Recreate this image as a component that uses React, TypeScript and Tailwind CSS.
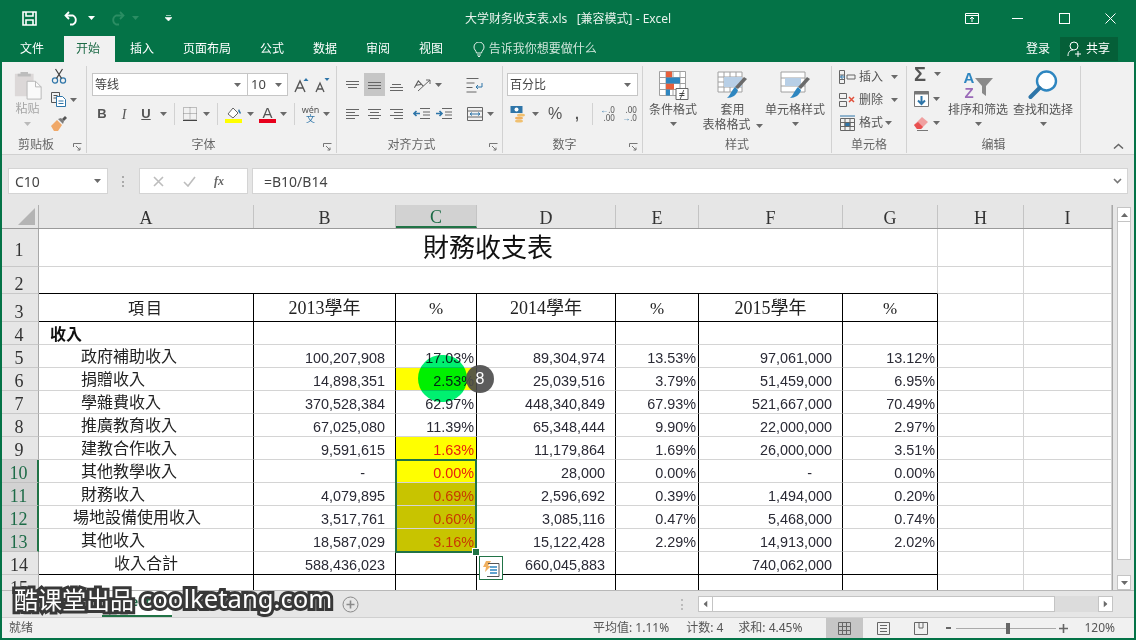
// App.tsx - Excel window, 财务收支表
import type { ReactNode } from 'react';

const tabs = ['文件', '开始', '插入', '页面布局', '公式', '数据', '审阅', '视图'];

const colW = ['w-[215px]', 'w-[142px]', 'w-[81px]', 'w-[139px]', 'w-[83px]', 'w-[144px]', 'w-[95px]', 'w-[86px]', 'w-[88px]'];
const colNames = ['A', 'B', 'C', 'D', 'E', 'F', 'G', 'H', 'I'];

type Row = { n: number; label: string; pad: string; v: string[] };

const rows: Row[] = [
    { n: 5, label: '政府補助收入', pad: 'pl-[42px]', v: ['100,207,908', '17.03%', '89,304,974', '13.53%', '97,061,000', '13.12%'] },
    { n: 6, label: '捐贈收入', pad: 'pl-[42px]', v: ['14,898,351', '2.53%', '25,039,516', '3.79%', '51,459,000', '6.95%'] },
    { n: 7, label: '學雜費收入', pad: 'pl-[42px]', v: ['370,528,384', '62.97%', '448,340,849', '67.93%', '521,667,000', '70.49%'] },
    { n: 8, label: '推廣教育收入', pad: 'pl-[42px]', v: ['67,025,080', '11.39%', '65,348,444', '9.90%', '22,000,000', '2.97%'] },
    { n: 9, label: '建教合作收入', pad: 'pl-[42px]', v: ['9,591,615', '1.63%', '11,179,864', '1.69%', '26,000,000', '3.51%'] },
    { n: 10, label: '其他教學收入', pad: 'pl-[42px]', v: ['-', '0.00%', '28,000', '0.00%', '-', '0.00%'] },
    { n: 11, label: '財務收入', pad: 'pl-[42px]', v: ['4,079,895', '0.69%', '2,596,692', '0.39%', '1,494,000', '0.20%'] },
    { n: 12, label: '場地設備使用收入', pad: 'pl-[34px]', v: ['3,517,761', '0.60%', '3,085,116', '0.47%', '5,468,000', '0.74%'] },
    { n: 13, label: '其他收入', pad: 'pl-[42px]', v: ['18,587,029', '3.16%', '15,122,428', '2.29%', '14,913,000', '2.02%'] },
];

const cFill = (n: number) => {
    if (n === 6 || n === 9 || n === 10) return 'bg-[#ffff00]';
    if (n >= 11) return 'bg-[#c8c400]';
    return '';
};
const cText = (n: number) => {
    if (n === 9 || n === 10) return 'text-[#e8200c]';
    if (n >= 11) return 'text-[#c83a00]';
    return 'text-[#2a2a35]';
};

const Caret = ({ className = '' }: { className?: string }) => (
    <svg width="7" height="4" viewBox="0 0 7 4" className={className}><path d="M0 0h7L3.5 4z" fill="#6a6a6a" /></svg>
);

const RowNum = ({ n, h }: { n: number; h: string }) => {
    const sel = n >= 10 && n <= 13;
    return (
        <div className={`${h} w-[39px] shrink-0 flex ${n === 1 ? 'items-center pt-[4px]' : 'items-end'} justify-center border-b border-r font-['Liberation_Serif',serif] text-[18px] leading-[18px] ${sel ? 'bg-[#d2d2d2] text-[#1d6b47] border-b-[#c0c0c0] border-r-2 border-r-[#217346]' : 'bg-[#e6e6e6] text-[#333] border-b-[#c8c8c8] border-r-[#a8a8a8]'}`}>
            {n}
        </div>
    );
};

const Launcher = () => (
    <svg width="9" height="9" viewBox="0 0 9 9" className="absolute right-[4px] top-[6px]" fill="none" stroke="#777">
        <path d="M.5 4V.5H8.5" /><path d="M3 3l4 4M7 4.5V7H4.5" />
    </svg>
);

const Group = ({ w, label, launcher, children }: { w: string; label: string; launcher?: boolean; children: ReactNode }) => (
    <div className={`${w} shrink-0 h-[87px] mt-[4px] flex flex-col border-r border-r-[#d2d2d2]`}>
        <div className="flex-1 min-h-0">{children}</div>
        <div className={`relative h-[16px] text-center text-[12px] leading-[16px] text-[#666] ${launcher ? 'pr-[16px]' : ''}`}>
            {label}
            {launcher && <Launcher />}
        </div>
    </div>
);

const LinesIcon = ({ lines }: { lines: [number, number, number][] }) => (
    <svg width="15" height="14" viewBox="0 0 15 14" stroke="#666" fill="none">
        {lines.map(([y, a, b]) => <path key={y} d={`M${a} ${y}.5H${b}`} />)}
    </svg>
);

const Sep = () => <div className="w-px h-[22px] bg-[#d2d2d2]" />;

const Clipboard = () => (
    <Group w="w-[85px]" label="剪贴板" launcher>
        <div className="flex pl-[9px] pt-[2px]">
            <div className="w-[33px] flex flex-col items-center">
                <svg width="30" height="30" viewBox="0 0 30 32" className="mt-[2px]">
                    <path d="M1 4h20v24H1z" fill="#dcd8d8" />
                    <path d="M7 2h8v2h3v3H4V4h3z" fill="#bdbdbd" />
                    <path d="M14 12h9l6 6v13H14z" fill="#fafafa" stroke="#b5b5b5" />
                    <path d="M23 12v6h6" fill="none" stroke="#b5b5b5" />
                </svg>
                <div className="text-[12px] leading-[16px] text-[#a6a6a6] mt-[1px]">粘贴</div>
                <Caret className="mt-[5px] opacity-40" />
            </div>
            <div className="ml-[7px] flex flex-col gap-[8px] pt-0">
                <svg width="16" height="16" viewBox="0 0 16 16" fill="none" stroke="#2e75a8" strokeWidth="1.2">
                    <circle cx="4" cy="12.5" r="2.6" /><circle cx="12" cy="12.5" r="2.6" />
                    <path d="M5.5 10.3L11.5 1M10.5 10.3L4.5 1" stroke="#444" />
                </svg>
                <div className="flex items-center gap-[3px]">
                    <svg width="16" height="15" viewBox="0 0 16 15" fill="none" stroke="#555">
                        <path d="M.5.5h8v10h-8zM2.5 3.5h4M2.5 6h4" />
                        <path d="M5.5 4.5h6l3 3v7h-9z" fill="#fff" stroke="#2e75a8" />
                        <path d="M7.5 9h5M7.5 11.5h5" stroke="#2e75a8" />
                    </svg>
                    <Caret />
                </div>
                <svg width="16" height="16" viewBox="0 0 16 16">
                    <path d="M0 11l6-6 5 5-4 6H3z" fill="#f0a868" />
                    <path d="M7 4l3-1 3 3-1 3z" fill="#7d7d7d" />
                    <path d="M11 4l3-3 2 2-3 3z" fill="#555" />
                </svg>
            </div>
        </div>
    </Group>
);

const FontGroup = () => (
    <Group w="w-[250px]" label="字体" launcher>
        <div className="pl-[5px] pt-[7px]">
            <div className="flex items-center">
                <div className="w-[156px] h-[23px] bg-white border border-[#c6c6c6] flex items-center justify-between pl-[2px] pr-[6px] text-[12px] text-[#444]">
                    等线<Caret />
                </div>
                <div className="w-[40px] h-[23px] bg-white border border-l-0 border-[#c6c6c6] flex items-center justify-between pl-[3px] pr-[5px] text-[13px] text-[#444]">
                    10<Caret />
                </div>
                <svg width="16" height="16" viewBox="0 0 16 16" className="ml-[6px]">
                    <path d="M1 15L6 4l5 11M3 11h6" fill="none" stroke="#555" strokeWidth="1.4" />
                    <path d="M9.5 4L12 1l2.5 3z" fill="#2e75a8" />
                </svg>
                <svg width="16" height="16" viewBox="0 0 16 16" className="ml-[5px]">
                    <path d="M1 15l4-9 4 9M2.6 12h5" fill="none" stroke="#555" strokeWidth="1.3" />
                    <path d="M9.5 1h5L12 4z" fill="#2e75a8" />
                </svg>
            </div>
            <div className="flex items-center h-[22px] mt-[7px] text-[#555]">
                <span className="ml-[4px] w-[12px] text-center font-['Liberation_Sans',sans-serif] font-bold text-[13px]">B</span>
                <span className="ml-[10px] w-[12px] text-center font-['Liberation_Serif',serif] italic text-[14px]">I</span>
                <span className="ml-[10px] w-[12px] text-center font-['Liberation_Sans',sans-serif] font-bold text-[13px] underline">U</span>
                <Caret className="ml-[8px]" />
                <div className="ml-[7px]"><Sep /></div>
                <svg width="14" height="14" viewBox="0 0 14 14" className="ml-[8px]" fill="none" stroke="#888" strokeDasharray="1 1">
                    <path d="M.5.5h13v12H.5zM7 .5v12M.5 6.5h13" /><path d="M0 13.5h14" stroke="#444" strokeDasharray="none" />
                </svg>
                <Caret className="ml-[6px]" />
                <div className="ml-[7px]"><Sep /></div>
                <div className="ml-[7px] w-[17px] flex flex-col items-center">
                    <svg width="16" height="13" viewBox="0 0 16 13">
                        <path d="M2 8l5-6 5 5-5 5z" fill="#fff" stroke="#666" />
                        <path d="M12 5l2 3 1-1-2-4z" fill="#2e75a8" />
                    </svg>
                    <div className="w-[17px] h-[4px] bg-[#ffff00]" />
                </div>
                <Caret className="ml-[5px]" />
                <div className="ml-[5px] w-[17px] flex flex-col items-center">
                    <span className="text-[15px] leading-[13px] font-['Liberation_Sans',sans-serif] text-[#555]">A</span>
                    <div className="w-[17px] h-[4px] bg-[#e8001c]" />
                </div>
                <Caret className="ml-[4px]" />
                <div className="ml-[7px]"><Sep /></div>
                <div className="ml-[7px] w-[17px] flex flex-col items-center leading-none">
                    <span className="text-[9px] leading-[9px] font-['Noto_Sans',sans-serif] text-[#555]">wén</span>
                    <span className="text-[9px] leading-[10px] text-[#2e75a8]">文</span>
                </div>
                <Caret className="ml-[4px]" />
            </div>
        </div>
    </Group>
);

const AlignGroup = () => (
    <Group w="w-[166px]" label="对齐方式" launcher>
        <div className="pl-[8px] pt-[7px]">
            <div className="flex items-center h-[23px]">
                <LinesIcon lines={[[3, 1, 14], [6, 1, 14], [9, 3, 12]]} />
                <div className="ml-[4px] w-[21px] h-[23px] bg-[#c6c6c6] flex items-center justify-center"><LinesIcon lines={[[4, 1, 14], [7, 1, 14], [10, 1, 14]]} /></div>
                <div className="ml-[4px]"><LinesIcon lines={[[6, 3, 12], [9, 1, 14], [12, 1, 14]]} /></div>
                <svg width="20" height="16" viewBox="0 0 20 16" fill="none" stroke="#555" className="ml-[9px]">
                    <path d="M1 10l5-6 4 6M3 8h5" transform="rotate(-10 5 8)" />
                    <path d="M5 14L17 3M13 3h4v4" stroke="#666" />
                </svg>
                <Caret className="ml-[2px]" />
                <div className="ml-[24px]">
                    <svg width="18" height="16" viewBox="0 0 18 16" fill="none" stroke="#666">
                        <path d="M.5 1.5h12M.5 6h8M.5 10.5h6M.5 15h10" />
                        <path d="M16 6v4h-6M12 8l-2 2 2 2" stroke="#2e75a8" />
                    </svg>
                </div>
            </div>
            <div className="flex items-center h-[22px] mt-[7px]">
                <LinesIcon lines={[[2, 1, 14], [5, 1, 10], [8, 1, 14], [11, 1, 10]]} />
                <div className="ml-[7px]"><LinesIcon lines={[[2, 1, 14], [5, 3, 12], [8, 1, 14], [11, 3, 12]]} /></div>
                <div className="ml-[7px]"><LinesIcon lines={[[2, 1, 14], [5, 5, 14], [8, 1, 14], [11, 5, 14]]} /></div>
                <svg width="17" height="14" viewBox="0 0 17 14" fill="none" className="ml-[9px]">
                    <path d="M7 1.5h10M10 5h7M10 8h7M7 11.5h10" stroke="#666" />
                    <path d="M7 6.5H1M3.5 4L1 6.5 3.5 9" stroke="#2e75a8" strokeWidth="1.6" />
                </svg>
                <svg width="17" height="14" viewBox="0 0 17 14" fill="none" className="ml-[5px]">
                    <path d="M7 1.5h10M10 5h7M10 8h7M7 11.5h10" stroke="#666" />
                    <path d="M1 6.5h6M4.5 4L7 6.5 4.5 9" stroke="#2e75a8" strokeWidth="1.6" />
                </svg>
                <svg width="16" height="14" viewBox="0 0 16 14" fill="none" stroke="#666" className="ml-[15px]">
                    <path d="M.5.5h15v13H.5zM.5 4h15M.5 10h15" />
                    <path d="M3 7h10M5 5.5L3 7l2 1.5M11 5.5L13 7l-2 1.5" stroke="#2e75a8" />
                </svg>
                <Caret className="ml-[4px]" />
            </div>
        </div>
    </Group>
);

const NumberGroup = () => (
    <Group w="w-[140px]" label="数字" launcher>
        <div className="pl-[4px] pt-[7px]">
            <div className="w-[131px] h-[23px] bg-white border border-[#c6c6c6] flex items-center justify-between pl-[2px] pr-[6px] text-[12px] text-[#444]">
                百分比<Caret />
            </div>
            <div className="flex items-center h-[22px] mt-[7px]">
                <svg width="17" height="18" viewBox="0 0 17 18" className="ml-[3px]">
                    <path d="M.5 1h12v7H.5z" fill="#2e75a8" /><circle cx="6.5" cy="4.5" r="2" fill="#fff" />
                    <ellipse cx="11" cy="10" rx="4" ry="1.6" fill="#f0c070" />
                    <ellipse cx="9" cy="13" rx="4" ry="1.6" fill="#f0b060" />
                    <ellipse cx="9" cy="16" rx="4" ry="1.6" fill="#f0c070" />
                </svg>
                <Caret className="ml-[5px]" />
                <span className="ml-[9px] font-['Liberation_Sans',sans-serif] text-[16px] text-[#555] w-[14px]">%</span>
                <span className="ml-[13px] font-['Liberation_Sans',sans-serif] font-bold text-[14px] leading-[14px] text-[#555]">,</span>
                <div className="ml-[13px]"><Sep /></div>
                <div className="ml-[7px] w-[15px] font-['Noto_Sans',sans-serif] text-[8px] leading-[8px] text-[#555] text-right">
                    <div><span className="text-[#2e75a8]">←</span>.0</div><div>.00</div>
                </div>
                <div className="ml-[7px] w-[15px] font-['Noto_Sans',sans-serif] text-[8px] leading-[8px] text-[#555] text-right">
                    <div>.00</div><div><span className="text-[#2e75a8]">→</span>.0</div>
                </div>
            </div>
        </div>
    </Group>
);

const StylesGroup = () => (
    <Group w="w-[189px]" label="样式">
        <div className="flex pl-[5px] text-[12px] leading-[15px] text-[#555] text-center">
            <div className="w-[50px] flex flex-col items-center">
                <svg width="31" height="31" viewBox="0 0 31 31" className="mt-[4px] mb-[1px]">
                    <path d="M1.5 1.5h26v24h-26zM1.5 7.5h26M1.5 13.5h26M1.5 19.5h26M8 1.5v24M15 1.5v24M22 1.5v24" fill="#fff" stroke="#a0a0a0" />
                    <path d="M8 1.5h6v6H8zM8 13.5h8v6H8z" fill="#e8603c" /><path d="M8 7.5h14v6H8zM8 19.5h4v6H8z" fill="#2e86c0" />
                    <path d="M18 18.5h12v11H18z" fill="#fff" stroke="#666" />
                    <text x="24" y="28" fontSize="11" textAnchor="middle" fill="#444">≠</text>
                </svg>
                条件格式
                <Caret className="mt-[5px]" />
            </div>
            <div className="ml-[6px] w-[57px] flex flex-col items-center">
                <svg width="31" height="31" viewBox="0 0 31 31" className="mt-[4px] mb-[1px]">
                    <path d="M1 2h24v20H1zM1 7h24M1 12h24M1 17h24M7 2v20M13 2v20M19 2v20" fill="#fff" stroke="#a0a0a0" />
                    <path d="M7 7h18v10H7z" fill="#b8cfe6" />
                    <path d="M30 9l-9 10-3-2 9-10z" fill="#6a6a6a" />
                    <path d="M18 17l3 3c-1 5-6 8-11 8 3-2 4-7 8-11z" fill="#2e86c0" />
                </svg>
                <div>套用</div>
                <div className="whitespace-nowrap">表格格式<Caret className="inline ml-[5px]" /></div>
            </div>
            <div className="ml-[2px] w-[64px] flex flex-col items-center">
                <svg width="31" height="31" viewBox="0 0 31 31" className="mt-[4px] mb-[1px]">
                    <path d="M1 2h24v20H1zM1 8h24M1 16h24" fill="#fff" stroke="#a0a0a0" />
                    <path d="M5 8h16v8H5z" fill="#b8cfe6" />
                    <path d="M30 9l-9 10-3-2 9-10z" fill="#6a6a6a" />
                    <path d="M18 17l3 3c-1 5-6 8-11 8 3-2 4-7 8-11z" fill="#2e86c0" />
                </svg>
                单元格样式
                <Caret className="mt-[5px]" />
            </div>
        </div>
    </Group>
);

const CellsGroup = () => (
    <Group w="w-[75px]" label="单元格">
        <div className="pl-[7px] pt-[1px] flex flex-col gap-[3px] text-[12px] leading-[20px] text-[#555]">
            <div className="flex items-center h-[20px]">
                <svg width="17" height="16" viewBox="0 0 17 16" fill="none" stroke="#666">
                    <path d="M.5 1.5h5v13h-5zM.5 6h5M.5 10.5h5M8 6h8v4H8z" /><path d="M6 8H1.5M3.5 6L1.5 8l2 2" stroke="#2e75a8" />
                </svg>
                <span className="ml-[3px]">插入</span><Caret className="ml-[8px]" />
            </div>
            <div className="flex items-center h-[20px]">
                <svg width="17" height="16" viewBox="0 0 17 16" fill="none" stroke="#666">
                    <path d="M.5 1.5h7v5h-7zM.5 9.5h7v5h-7z" /><path d="M10 5l5 5M15 5l-5 5" stroke="#e0503c" strokeWidth="1.5" />
                </svg>
                <span className="ml-[3px]">删除</span><Caret className="ml-[8px]" />
            </div>
            <div className="flex items-center h-[20px]">
                <svg width="17" height="16" viewBox="0 0 17 16" fill="none" stroke="#666">
                    <path d="M1.5 3.5h14v12h-14zM1.5 7.5h14M1.5 11.5h14M6 3.5v12M11 3.5v12" />
                    <path d="M6 7.5h5v4H6z" fill="#2e75a8" /><path d="M1 1h15" stroke="#2e75a8" />
                </svg>
                <span className="ml-[3px]">格式</span><Caret className="ml-[2px]" />
            </div>
        </div>
    </Group>
);

const EditGroup = () => (
    <Group w="w-[174px]" label="编辑">
        <div className="flex">
            <div className="pl-[7px] pt-0 w-[40px] flex flex-col gap-[8px]">
                <div className="flex items-center h-[16px]">
                    <span className="w-[16px] text-[20px] leading-[16px] font-bold font-['Liberation_Sans',sans-serif] text-[#555]">Σ</span>
                    <Caret className="ml-[4px]" />
                </div>
                <div className="flex items-center h-[16px] mt-[1px]">
                    <svg width="15" height="16" viewBox="0 0 15 16"><path d="M.5.5h14v15H.5z" fill="#fff" stroke="#777" /><path d="M.5.5h14v3H.5z" fill="#777" /><path d="M7.5 5v8M4 9.5l3.5 3.5L11 9.5" fill="none" stroke="#2e75a8" strokeWidth="2" /></svg>
                    <Caret className="ml-[4px]" />
                </div>
                <div className="flex items-center h-[16px]">
                    <svg width="15" height="15" viewBox="0 0 15 15"><path d="M0 9l8-8 6 5-7 7H3z" fill="#f0a0a0" /><path d="M0 9l3 4h4l2-2-5-5z" fill="#e85050" /><path d="M3 14.5h11" stroke="#777" /></svg>
                    <Caret className="ml-[4px]" />
                </div>
            </div>
            <div className="ml-[1px] w-[60px] flex flex-col items-center text-[12px] leading-[15px] text-[#555]">
                <svg width="32" height="30" viewBox="0 0 32 30" className="mt-[4px] mb-[2px]">
                    <text x="7" y="13" fontSize="15" fontWeight="bold" textAnchor="middle" fill="#2e86c0" fontFamily="Liberation Sans">A</text>
                    <text x="7" y="28" fontSize="15" fontWeight="bold" textAnchor="middle" fill="#9a6ab8" fontFamily="Liberation Sans">Z</text>
                    <path d="M13 8h18l-7 8v10l-4-3v-7z" fill="#8a8a8a" />
                </svg>
                <span className="whitespace-nowrap">排序和筛选</span>
                <Caret className="mt-[5px]" />
            </div>
            <div className="ml-[5px] w-[60px] flex flex-col items-center text-[12px] leading-[15px] text-[#555]">
                <svg width="30" height="30" viewBox="0 0 30 30" fill="none" className="mt-[4px] mb-[2px]">
                    <circle cx="18.5" cy="11" r="9.5" stroke="#2e86c0" strokeWidth="2.4" fill="#fff" />
                    <path d="M11.5 18L2.5 27" stroke="#2e75a8" strokeWidth="4" strokeLinecap="round" />
                </svg>
                <span className="whitespace-nowrap">查找和选择</span>
                <Caret className="mt-[5px]" />
            </div>
        </div>
    </Group>
);

const SheetRow = ({ r }: { r: Row }) => (
    <div className="flex h-[23px]">
        <RowNum n={r.n} h="h-[23px]" />
        <div className={`${colW[0]} ${r.pad} h-[23px] border-r border-r-black border-b border-b-[#d4d4d4] text-[16px] leading-[20px] text-[#222] whitespace-nowrap font-['Noto_Sans_CJK_TC',sans-serif]`}>{r.label}</div>
        {r.v.map((val, i) => {
            const isC = i === 1;
            const isPct = i % 2 === 1;
            const dash = val === '-';
            return (
                <div
                    key={i}
                    className={`${colW[i + 1]} h-[23px] border-r border-r-black border-b border-b-[#d4d4d4] text-right text-[14.4px] leading-[26px] ${isC ? `${cFill(r.n)} ${cText(r.n)}` : 'text-[#2a2a35]'} ${isPct ? 'pr-[2px]' : dash ? 'pr-[30px]' : 'pr-[10px]'} font-['Liberation_Sans',sans-serif]`}
                >
                    {val}
                </div>
            );
        })}
        <div className={`${colW[7]} h-[23px] border-r border-b border-[#d4d4d4]`} />
        <div className={`${colW[8]} h-[23px] border-r border-b border-[#d4d4d4]`} />
    </div>
);

const HeadCell = ({ w, children, num }: { w: string; children: ReactNode; num?: boolean }) => (
    <div className={`${w} h-[28px] pt-[2px] border-r border-r-black border-b border-b-black flex items-center justify-center text-[#222] ${num ? "font-['Liberation_Serif','Noto_Sans_CJK_TC',serif] text-[18px]" : "font-['Liberation_Serif','Noto_Sans_CJK_TC',serif] text-[17px]"}`}>
        {children}
    </div>
);

const Sheet = () => (
    <div className="relative w-[1113px] h-[385px] overflow-hidden bg-white border-r border-r-[#a8a8a8]">
        {/* column headers */}
        <div className="flex h-[24px] bg-[#e6e6e6] border-b border-b-[#9a9a9a]">
            <div className="w-[39px] relative border-r border-r-[#b0b0b0]">
                <div className="absolute right-[3px] bottom-[3px] w-0 h-0 border-b-[17px] border-b-[#b4b4b4] border-l-[17px] border-l-transparent" />
            </div>
            {colNames.map((c, i) => (
                <div
                    key={c}
                    className={`${colW[i]} flex items-center justify-center pt-[2px] border-r border-r-[#c4c4c4] font-['Liberation_Serif',serif] text-[18px] leading-[20px] ${c === 'C' ? 'bg-[#d2d2d2] text-[#1d6b47] border-b-2 border-b-[#217346]' : 'text-[#333]'}`}
                >
                    {c}
                </div>
            ))}
        </div>

        {/* rows 1-2 */}
        <div className="flex h-[38px]">
            <RowNum n={1} h="h-[38px]" />
            <div className="w-[899px] border-b border-b-[#d4d4d4] border-r border-r-[#d4d4d4] text-center text-[26px] leading-[34px] text-[#111] font-['Noto_Sans_CJK_TC',sans-serif]">財務收支表</div>
            <div className={`${colW[7]} border-r border-b border-[#d4d4d4]`} />
            <div className={`${colW[8]} border-r border-b border-[#d4d4d4]`} />
        </div>
        <div className="flex h-[27px]">
            <RowNum n={2} h="h-[27px]" />
            <div className="w-[899px] border-b border-b-black border-r border-r-[#d4d4d4]" />
            <div className={`${colW[7]} border-r border-b border-[#d4d4d4]`} />
            <div className={`${colW[8]} border-r border-b border-[#d4d4d4]`} />
        </div>

        {/* row 3 */}
        <div className="flex h-[28px]">
            <RowNum n={3} h="h-[28px]" />
            <HeadCell w={colW[0]}><span className="tracking-[2px] text-[16px]">項目</span></HeadCell>
            <HeadCell w={colW[1]} num>2013學年</HeadCell>
            <HeadCell w={colW[2]}>%</HeadCell>
            <HeadCell w={colW[3]} num>2014學年</HeadCell>
            <HeadCell w={colW[4]}>%</HeadCell>
            <HeadCell w={colW[5]} num>2015學年</HeadCell>
            <HeadCell w={colW[6]}>%</HeadCell>
            <div className={`${colW[7]} border-r border-b border-[#d4d4d4]`} />
            <div className={`${colW[8]} border-r border-b border-[#d4d4d4]`} />
        </div>

        {/* row 4 */}
        <div className="flex h-[23px]">
            <RowNum n={4} h="h-[23px]" />
            <div className={`${colW[0]} pl-[11px] border-r border-r-black border-b border-b-[#d4d4d4] text-[16px] leading-[22px] font-bold text-[#111] font-['Noto_Sans_CJK_TC',sans-serif]`}>收入</div>
            {[1, 2, 3, 4, 5, 6].map(i => (
                <div key={i} className={`${colW[i]} border-r border-r-black border-b border-b-[#d4d4d4]`} />
            ))}
            <div className={`${colW[7]} border-r border-b border-[#d4d4d4]`} />
            <div className={`${colW[8]} border-r border-b border-[#d4d4d4]`} />
        </div>

        {rows.map(r => <SheetRow key={r.n} r={r} />)}

        {/* row 14 */}
        <div className="flex h-[23px] border-t border-t-black -mt-px box-content">
            <RowNum n={14} h="h-[23px]" />
            <div className={`${colW[0]} h-[23px] pl-[75px] border-r border-r-black border-b border-b-black text-[16px] leading-[20px] text-[#222] font-['Noto_Sans_CJK_TC',sans-serif]`}>收入合計</div>
            {['588,436,023', '', '660,045,883', '', '740,062,000', ''].map((val, i) => (
                <div key={i} className={`${colW[i + 1]} h-[23px] pr-[10px] border-r border-r-black border-b border-b-black text-right text-[14.4px] leading-[26px] text-[#2a2a35] font-['Liberation_Sans',sans-serif]`}>{val}</div>
            ))}
            <div className={`${colW[7]} h-[23px] border-r border-b border-[#d4d4d4]`} />
            <div className={`${colW[8]} h-[23px] border-r border-b border-[#d4d4d4]`} />
        </div>

        {/* row 15, cut off by the tab bar */}
        <div className="flex h-[23px]">
            <RowNum n={15} h="h-[23px]" />
            {[0, 1, 2, 3, 4, 5, 6].map(i => (
                <div key={i} className={`${colW[i]} h-[23px] border-r border-r-black`} />
            ))}
            <div className={`${colW[7]} h-[23px] border-r border-[#d4d4d4]`} />
            <div className={`${colW[8]} h-[23px] border-r border-[#d4d4d4]`} />
        </div>

        {/* selection C10:C13 */}
        <div className="absolute left-[395px] top-[254px] w-[82px] h-[94px] border-2 border-[#217346]" />
        <div className="absolute left-[473px] top-[344px] w-[6px] h-[6px] bg-[#217346] border border-white box-content -m-px" />

        {/* quick analysis button */}
        <div className="absolute left-[479px] top-[351px] w-[24px] h-[24px] bg-white border border-[#217346] flex items-center justify-center">
            <svg width="18" height="17" viewBox="0 0 18 17">
                <path d="M4 1h5L6 6h3L3 12l1-5H1z" fill="#f0b060" />
                <path d="M6 3.5h11v13H5" fill="none" stroke="#555" />
                <path d="M8 7h7M8 10h7M8 13h7" stroke="#2e86c0" strokeWidth="1.6" />
            </svg>
        </div>

        {/* mouse highlight + click counter */}
        <div className="absolute left-[418px] top-[150px] w-[49px] h-[47px] rounded-full bg-[#00f070] mix-blend-multiply" />
        <div className="absolute left-[466px] top-[160px] w-[28px] h-[28px] rounded-full bg-[#4a4a4a]/90 flex items-center justify-center text-[16px] text-white font-['Liberation_Sans',sans-serif]">8</div>
    </div>
);

export default function App() {
    return (
        <div className="relative w-[1136px] h-[640px] overflow-hidden bg-[#e6e6e6] font-['Noto_Sans','Noto_Sans_CJK_SC',sans-serif]">
            {/* Title bar */}
            <div className="grid grid-cols-[1fr_auto_1fr] items-center h-[36px] bg-[#047347] text-white">
                <div className="flex items-center">
                    <svg width="15" height="15" viewBox="0 0 15 15" className="ml-[22px]" fill="none" stroke="#fff" strokeWidth="1.6">
                        <path d="M1 1h13v13H1z" /><path d="M4 1v4h7V1M4 14V9h7v5" />
                    </svg>
                    <svg width="16" height="15" viewBox="0 0 16 15" fill="none" stroke="#fff" strokeWidth="1.8" className="ml-[27px]">
                        <path d="M5 1L1.5 4.5 5 8" /><path d="M2 4.5h7a5 5 0 010 9H6" />
                    </svg>
                    <Caret className="ml-[8px] [&>path]:fill-white" />
                    <svg width="16" height="15" viewBox="0 0 16 15" fill="none" stroke="#2b8d63" strokeWidth="1.8" className="ml-[14px]">
                        <path d="M11 1l3.5 3.5L11 8" /><path d="M14 4.5H7a5 5 0 000 9h3" />
                    </svg>
                    <Caret className="ml-[7px] [&>path]:fill-[#2b8d63]" />
                    <svg width="7" height="6" viewBox="0 0 7 6" className="ml-[26px]"><path d="M1 .5h5M0 2.5h7L3.5 6z" fill="#fff" stroke="#fff" strokeWidth=".6" /></svg>
                </div>
                <div className="mt-[2px] text-[12px] whitespace-pre text-[#e8f2ec]">大学财务收支表.xls   [兼容模式] - Excel</div>
                <div className="flex items-center justify-end pr-[20px]">
                    <svg width="14" height="11" viewBox="0 0 14 11" fill="none" stroke="#fff"><path d="M.5.5h13v10H.5zM.5 2.5h13" /><path d="M7 9V4M5 6l2-2 2 2" /></svg>
                    <div className="ml-[33px] w-[11px] h-px bg-white" />
                    <div className="ml-[36px] w-[11px] h-[11px] border border-white" />
                    <svg width="11" height="11" viewBox="0 0 11 11" stroke="#fff" className="ml-[35px]"><path d="M.5.5l10 10M10.5.5l-10 10" /></svg>
                </div>
            </div>

            {/* Tabs */}
            <div className="flex items-stretch h-[26px] bg-[#047347] text-[12px] text-white pl-[6.5px]">
                <div className="flex gap-[2px]">
                    {tabs.map(t => (
                        <div
                            key={t}
                            className={`pt-[4px] ${t === '开始' ? 'pl-[12px] pr-[15px] -mr-[0.5px] bg-[#f1f1f1] text-[#1d6b47]' : t === '文件' ? 'px-[13.5px] mr-[4.5px]' : 'px-[13.5px]'}`}
                        >
                            {t}
                        </div>
                    ))}
                </div>
                <div className="flex items-center ml-[16px] text-[#cfe5da]">
                    <svg width="12" height="15" viewBox="0 0 12 15" fill="none" stroke="#e4f0ea"><path d="M3.5 11C3 8 1 8 1 5a5 5 0 0110 0c0 3-2 3-2.500 6zM4 13h4M5 14.500h2" /></svg>
                    <span className="ml-[4px]">告诉我你想要做什么</span>
                </div>
                <div className="ml-auto flex items-center pr-[18px]">
                    <span>登录</span>
                    <div className="ml-[10px] w-[58px] h-[24px] bg-[#055f38] flex items-center pl-[7px] gap-[4px]">
                        <svg width="15" height="16" viewBox="0 0 15 16" fill="none" stroke="#fff"><circle cx="7" cy="5" r="4" /><path d="M1 15c0-4 2-6 5-6M8 13h6M11 10v6" /></svg>
                        共享
                    </div>
                </div>
            </div>

            {/* Ribbon */}
            <div className="relative flex h-[93px] bg-[#f1f1f1] border-b border-b-[#d0d0d0] pl-[2px]">
                <Clipboard />
                <FontGroup />
                <AlignGroup />
                <NumberGroup />
                <StylesGroup />
                <CellsGroup />
                <EditGroup />
                <svg width="11" height="6" viewBox="0 0 11 6" fill="none" stroke="#666" strokeWidth="1.5" className="absolute right-[12px] bottom-[5px]"><path d="M1 5.500l4.500-4 4.500 4" /></svg>
            </div>

            {/* Formula bar */}
            <div className="flex items-center h-[26px] mt-[13px] pl-[8px] text-[#444]">
                <div className="w-[100px] h-[26px] bg-white border border-[#d4d4d4] flex items-center justify-between pl-[6px] pr-[6px] text-[14px]">
                    C10<Caret />
                </div>
                <div className="ml-[14px] w-[2px] h-[11px] border-l-2 border-dotted border-[#aaa]" />
                <div className="ml-[15px] w-[109px] h-[26px] bg-white border border-[#d4d4d4] flex items-center">
                    <svg width="11" height="11" viewBox="0 0 11 11" stroke="#bdbdbd" strokeWidth="1.6" className="ml-[13px]"><path d="M1 1l9 9M10 1l-9 9" /></svg>
                    <svg width="13" height="11" viewBox="0 0 13 11" stroke="#bdbdbd" strokeWidth="1.6" fill="none" className="ml-[19px]"><path d="M1 6l4 4 7-9" /></svg>
                    <span className="ml-[18px] font-['Liberation_Serif',serif] italic font-bold text-[12px] text-[#666]">fx</span>
                </div>
                <div className="ml-[4px] w-[876px] h-[26px] bg-white border border-[#d4d4d4] flex items-center justify-between pl-[11px] pr-[5px] text-[14px]">
                    =B10/B14
                    <svg width="9" height="6" viewBox="0 0 9 6" fill="none" stroke="#777" strokeWidth="1.6"><path d="M1 1l3.500 3.500L8 1" /></svg>
                </div>
            </div>

            {/* Grid with vertical scrollbar */}
            <div className="flex mt-[11px] h-[385px]">
                <Sheet />
                <div className="ml-[4px] w-[14px] h-[383px] mt-[2px] flex flex-col">
                    <div className="h-[15px] bg-white border border-[#c4c4c4] flex items-center justify-center"><Caret className="rotate-180" /></div>
                    <div className="flex-1 flex flex-col">
                        <div className="h-[338px] bg-white border-x border-b border-[#c4c4c4]" />
                    </div>
                    <div className="h-[15px] bg-white border border-[#c4c4c4] flex items-center justify-center"><Caret /></div>
                </div>
            </div>

            {/* Sheet tabs + horizontal scrollbar */}
            <div className="flex items-center h-[27px] border-t border-t-[#b8b8b8] text-[12px] text-[#444]">
                <div className="ml-[102px] w-[70px] h-[26px] border-b-2 border-b-[#217346] bg-white text-center leading-[22px] text-[#1d6b47] font-bold">Sheet1</div>
                <div className="w-[75px] text-center">Sheet2</div>
                <div className="w-[75px] text-center">Sheet3</div>
                <svg width="17" height="17" viewBox="0 0 17 17" fill="none" stroke="#8a8a8a" className="ml-[20px]"><circle cx="8.500" cy="8.500" r="7.500" /><path d="M4.500 8.500h8M8.500 4.500v8" strokeWidth="1.6" /></svg>
                <div className="ml-[322px] w-[2px] h-[11px] border-l-2 border-dotted border-[#bbb]" />
                <div className="ml-[15px] w-[15px] h-[16px] bg-white border border-[#c4c4c4] flex items-center justify-center"><Caret className="rotate-90" /></div>
                <div className="w-[342px] h-[16px] bg-white border-y border-r border-[#c4c4c4]" />
                <div className="w-[43px] h-[16px] bg-[#dcdcdc]" />
                <div className="w-[15px] h-[16px] bg-white border border-[#c4c4c4] flex items-center justify-center"><Caret className="-rotate-90" /></div>
            </div>

            {/* Status bar */}
            <div className="flex items-center h-[21px] bg-[#f1f1f1] border-t border-t-[#d0d0d0] text-[12px] text-[#555] pl-[9px] whitespace-nowrap">
                <span>就绪</span>
                <span className="ml-[560px]">平均值: 1.11%</span>
                <span className="ml-[17px]">计数: 4</span>
                <span className="ml-[15px]">求和: 4.45%</span>
                <div className="ml-[24px] w-[37px] h-[21px] bg-[#c6c6c6] flex items-center justify-center">
                    <svg width="13" height="13" viewBox="0 0 13 13" fill="none" stroke="#666"><path d="M.5.5h12v12H.5zM4.500.5v12M8.500.5v12M.5 4.500h12M.5 8.500h12" /></svg>
                </div>
                <svg width="13" height="13" viewBox="0 0 13 13" fill="none" stroke="#666" className="ml-[14px]"><path d="M.5.5h12v12H.5zM3 3.500h7M3 6.500h7M3 9.500h7" /></svg>
                <svg width="14" height="13" viewBox="0 0 14 13" fill="none" stroke="#666" className="ml-[24px]"><path d="M.5.5h13v12H.5zM5 .5v5.500h4V.5" /></svg>
                <div className="ml-[18px] w-[5px] h-[2px] bg-[#666]" />
                <div className="relative ml-[5px] w-[100px] h-px bg-[#aaa]">
                    <div className="absolute left-[50px] -top-[5px] w-[4px] h-[11px] bg-[#666]" />
                </div>
                <svg width="9" height="9" viewBox="0 0 9 9" stroke="#666" strokeWidth="1.6" className="ml-[3px]"><path d="M0 4.500h9M4.500 0v9" /></svg>
                <span className="ml-[16px]">120%</span>
            </div>

            {/* App window edge */}
            <div className="absolute left-0 top-0 bottom-0 w-[2px] bg-[#047347]" />
            <div className="absolute right-0 top-0 bottom-0 w-[2px] bg-[#047347]" />
            <div className="absolute left-0 right-0 bottom-0 h-[2px] bg-[#047347]" />

            {/* Watermark */}
            <div className="absolute left-[14px] top-[581px] flex items-center text-white [-webkit-text-stroke:6px_#383838] [paint-order:stroke_fill] whitespace-nowrap">
                <span className="text-[24px] leading-[36px] font-['Noto_Sans_CJK_SC',sans-serif]">酷课堂出品</span>
                <span className="ml-[6px] text-[25.7px] leading-[36px] font-['Noto_Sans',sans-serif]">coolketang.com</span>
            </div>
        </div>
    );
}
